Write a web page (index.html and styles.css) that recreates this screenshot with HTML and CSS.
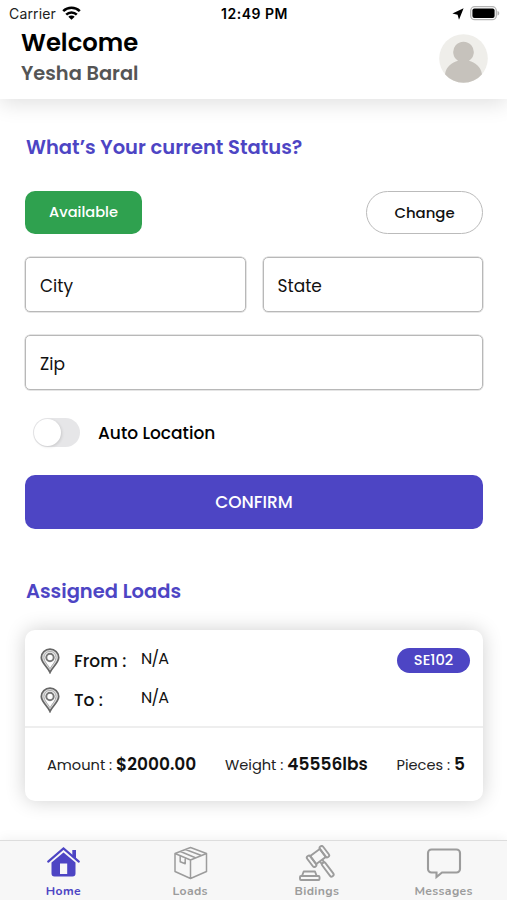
FILE: index.html
```
<!DOCTYPE html>
<html lang="en">
<head>
<meta charset="utf-8">
<title>Home</title>
<link rel="stylesheet" href="styles.css">
</head>
<body>
<div class="app">
  <header class="header">
    <div class="status">
      <div class="status-left"><span class="carrier">Carrier</span>
        <svg class="wifi" width="19" height="14" viewBox="0 0 19 14"><g fill="none" stroke="#000" stroke-width="2.5"><path d="M1.2 5.2a11.8 11.8 0 0 1 16.6 0"/><path d="M4.200 8.600a7.500 7.500 0 0 1 10.600 0"/></g><path d="M9.5 13.8 6.3 10.7a4.6 4.6 0 0 1 6.4 0z"/></svg>
      </div>
      <span class="time">12:49 PM</span>
      <div class="status-right">
        <svg width="12" height="12" viewBox="0 0 12 12"><path d="M11.600.3 7 11.700 5.600 6.800.4 5.600z"/></svg>
        <svg width="30" height="15" viewBox="0 0 30 15"><rect x=".7" y=".7" width="25.6" height="13" rx="4" fill="#fff" stroke="#b4b4b4" stroke-width="1.3"/><rect x="2.4" y="2.5" width="22.2" height="9.4" rx="2"/><path d="M27.5 5v4.6c2.4-.6 2.4-4 0-4.6z" fill="#b4b4b4"/></svg>
      </div>
    </div>
    <div class="profile">
      <div>
        <h1 class="welcome">Welcome</h1>
        <p class="name">Yesha Baral</p>
      </div>
      <svg class="avatar" width="49" height="49" viewBox="0 0 49 49"><circle cx="24.5" cy="24.5" r="24.3" fill="#efeeea"/><path d="M6 40.300C7.200 32.500 13 28.500 19 26.800A10.300 10.300 0 1 1 30 26.800C36 28.500 41.800 32.500 43 40.300A24.300 24.300 0 0 1 6 40.300z" fill="#c6c2bc"/></svg>
    </div>
  </header>

  <main class="content">
    <h2 class="title">What’s Your current Status?</h2>
    <div class="actions">
      <button class="available">Available</button>
      <button class="change">Change</button>
    </div>
    <div class="fields">
      <div class="field">City</div>
      <div class="field">State</div>
      <div class="field wide">Zip</div>
    </div>
    <div class="auto"><span class="switch"><span class="knob"></span></span><span>Auto Location</span></div>
    <button class="confirm">CONFIRM</button>

    <h2 class="title loads-title">Assigned Loads</h2>
    <section class="card">
      <div class="route">
        <div class="stop">
          <svg class="pin" width="20" height="26" viewBox="0 0 20 26"><path d="M10 24.500C8 19.500 1.300 15 1.300 9.600a8.700 8.500 0 0 1 17.400 0C18.700 15 12 19.500 10 24.500z" fill="#ddd" stroke="#666" stroke-width="1.700"/><path d="M10 20.700C8 17 4 13.500 4 9.500a6 6 0 0 1 12 0C16 13.500 12 17 10 20.700z" fill="#fff" stroke="#999" stroke-width=".8"/><circle cx="10" cy="9.500" r="3.700" fill="none" stroke="#777" stroke-width="2"/></svg>
          <span class="label">From :</span><span class="place">N/A</span><span class="badge">SE102</span>
        </div>
        <div class="stop">
          <svg class="pin" width="20" height="26" viewBox="0 0 20 26"><path d="M10 24.500C8 19.500 1.300 15 1.300 9.600a8.700 8.500 0 0 1 17.400 0C18.700 15 12 19.500 10 24.500z" fill="#ddd" stroke="#666" stroke-width="1.700"/><path d="M10 20.700C8 17 4 13.500 4 9.500a6 6 0 0 1 12 0C16 13.500 12 17 10 20.700z" fill="#fff" stroke="#999" stroke-width=".8"/><circle cx="10" cy="9.500" r="3.700" fill="none" stroke="#777" stroke-width="2"/></svg>
          <span class="label">To :</span><span class="place">N/A</span>
        </div>
      </div>
      <div class="facts">
        <span>Amount : <b>$2000.00</b></span>
        <span>Weight : <b>45556lbs</b></span>
        <span>Pieces : <b>5</b></span>
      </div>
    </section>
  </main>

  <nav class="tabs">
    <a class="tab active">
      <svg width="36" height="36" viewBox="0 0 36 36"><path d="M27.300 12V5H31v9.500z" fill="currentColor"/><path d="M3.200 16.600 18.500 3.500l15.300 13.100" fill="none" stroke="currentColor" stroke-width="2.200" stroke-linecap="round"/><path fill="currentColor" fill-rule="evenodd" d="M18.500 7.500 30.500 17.500V28.500a3 3 0 0 1-3 3h-18a3 3 0 0 1-3-3v-11zM15 18.500V29h7.200V18.500z"/></svg>
      <span>Home</span>
    </a>
    <a class="tab">
      <svg width="36" height="36" viewBox="0 0 36 36"><g fill="none" stroke="currentColor" stroke-width="1.500" stroke-linejoin="round"><path d="M18.500 2.500 34.500 8.500v18l-16 7-15.500-7v-18zM3 8.500l15.500 6.500 16-6.500M18.500 15v18.500M13.500 4.500l16 6M8.500 6.500l15.500 6.500M8.200 10.800v6l5 2v-6"/></g></svg>
      <span>Loads</span>
    </a>
    <a class="tab">
      <svg width="36" height="36" viewBox="0 0 36 36"><g fill="none" stroke="currentColor" stroke-width="1.900" stroke-linejoin="round"><g transform="rotate(-37 19 11.500)"><rect x="13" y="6.500" width="12" height="10"/><rect x="9" y="5" width="4" height="13" rx="1.800"/><rect x="25" y="5" width="4" height="13" rx="1.800"/><path d="M17.500 16.500v3h3v-3"/><rect x="17" y="19.500" width="4" height="16.500" rx="1.800"/></g><path d="M4.700 26.500H16l1.700 4.500H3z"/><rect x="1" y="31" width="19.500" height="4" rx="1"/></g></svg>
      <span>Bidings</span>
    </a>
    <a class="tab">
      <svg width="36" height="36" viewBox="0 0 36 36"><path d="M5.500 4.500h25a3.500 3.500 0 0 1 3.500 3.500v16a3.500 3.500 0 0 1-3.500 3.500H16l-5.500 4.500V27.500h-5A3.500 3.500 0 0 1 2 24V8A3.500 3.500 0 0 1 5.500 4.500z" fill="none" stroke="currentColor" stroke-width="2.100"/></svg>
      <span>Messages</span>
    </a>
  </nav>
</div>
</body>
</html>
```
FILE: styles.css
```
* { box-sizing: border-box; }
body { margin: 0; background: #fff; color: #111; font-family: Poppins, Inter, sans-serif; }
h1, h2, p { margin: 0; }
button { font-family: inherit; padding: 0; border: 0; }
svg { display: block; flex: none; }

.app { width: 507px; height: 900px; display: flex; flex-direction: column; overflow: hidden; }

.header { height: 99px; background: #fff; box-shadow: 0 5px 20px rgba(0, 0, 0, .12); }
.status { height: 27px; padding: 0 7px 0 9px; display: grid; grid-template-columns: 1fr auto 1fr; align-items: center; font: 14px/27px Inter, sans-serif; color: #000; }
.status-left { display: flex; align-items: center; gap: 6px; }
.carrier { letter-spacing: .15px; color: #222; }
.wifi { margin-top: -2px; }
.time { font-weight: 600; letter-spacing: .5px; }
.status-right { display: flex; align-items: center; justify-content: flex-end; gap: 6px; }
.profile { padding: 1px 19px 0 21px; display: flex; justify-content: space-between; }
.welcome { font-size: 24.300px; line-height: 30px; font-weight: 600; color: #000; }
.name { font-size: 19.400px; line-height: 31px; font-weight: 600; color: #555; }
.avatar { margin-top: 6px; }

.content { flex: 1; padding: 34px 24px 0 25px; }
.title { padding-left: 1px; font-size: 19.500px; line-height: 30px; font-weight: 600; color: #4d45c4; }
.actions { margin-top: 28px; display: flex; justify-content: space-between; }
.available, .change { width: 117px; height: 43px; font-weight: 500; }
.available { border-radius: 10px; background: #2fa14f; color: #fff; font-size: 14.600px; }
.change { border: 1.500px solid #bbb; border-radius: 22px; background: #fff; color: #111; font-size: 14.900px; }
.fields { margin-top: 23px; display: grid; grid-template-columns: 1fr 1fr; gap: 23px 17px; }
.field { height: 55px; padding-left: 14px; border: 1px solid #b8b8b8; border-radius: 5px; box-shadow: 0 0 0 .5px #ccc; font-size: 17px; line-height: 56px; }
.wide { grid-column: span 2; }
.auto { margin: 28px 0 28px 8px; height: 29px; display: flex; align-items: center; gap: 18px; font-size: 17px; font-weight: 500; color: #000; }
.switch { width: 47px; height: 29px; padding: 1px; border-radius: 15px; background: #e6e6e8; }
.knob { display: block; width: 27px; height: 27px; border-radius: 50%; background: #fff; box-shadow: 1px 1px 3px rgba(0, 0, 0, .12); }
.confirm { display: block; width: 100%; height: 54px; margin-bottom: 48px; border-radius: 10px; background: #4d45c4; color: #fff; font-size: 17px; font-weight: 500; }

.card { margin-top: 23px; height: 171px; border-radius: 10px; background: #fff; box-shadow: 0 0 20px rgba(0, 0, 0, .19); }
.route { height: 98px; padding: 11px 13px 0 15px; border-bottom: 2px solid #eee; }
.stop { height: 39px; display: flex; align-items: center; }
.label { width: 67px; margin-left: 14px; font-size: 17px; font-weight: 500; }
.place { margin-top: -4px; font-size: 16px; letter-spacing: -.8px; }
.badge { width: 73px; height: 25px; margin-left: auto; border-radius: 13px; background: #4d45c4; color: #fff; font-size: 14.600px; line-height: 25px; font-weight: 500; text-align: center; }
.facts { height: 72px; padding: 0 18px 0 22px; display: flex; align-items: center; justify-content: space-between; font-size: 14.600px; color: #222; }
.facts b { font-size: 17px; font-weight: 600; color: #111; }

.tabs { height: 60px; padding-top: 4px; border-top: 1px solid #ddd; background: #f7f7f7; box-shadow: 0 0 12px rgba(0, 0, 0, .07); display: grid; grid-template-columns: repeat(4, 1fr); color: #9c9c9c; }
.tab { display: flex; flex-direction: column; align-items: center; font: 700 12.200px/16px Nunito, Inter, sans-serif; letter-spacing: .350px; }
.tab span { margin-top: 2px; }
.active { color: #4d45c4; }
```
